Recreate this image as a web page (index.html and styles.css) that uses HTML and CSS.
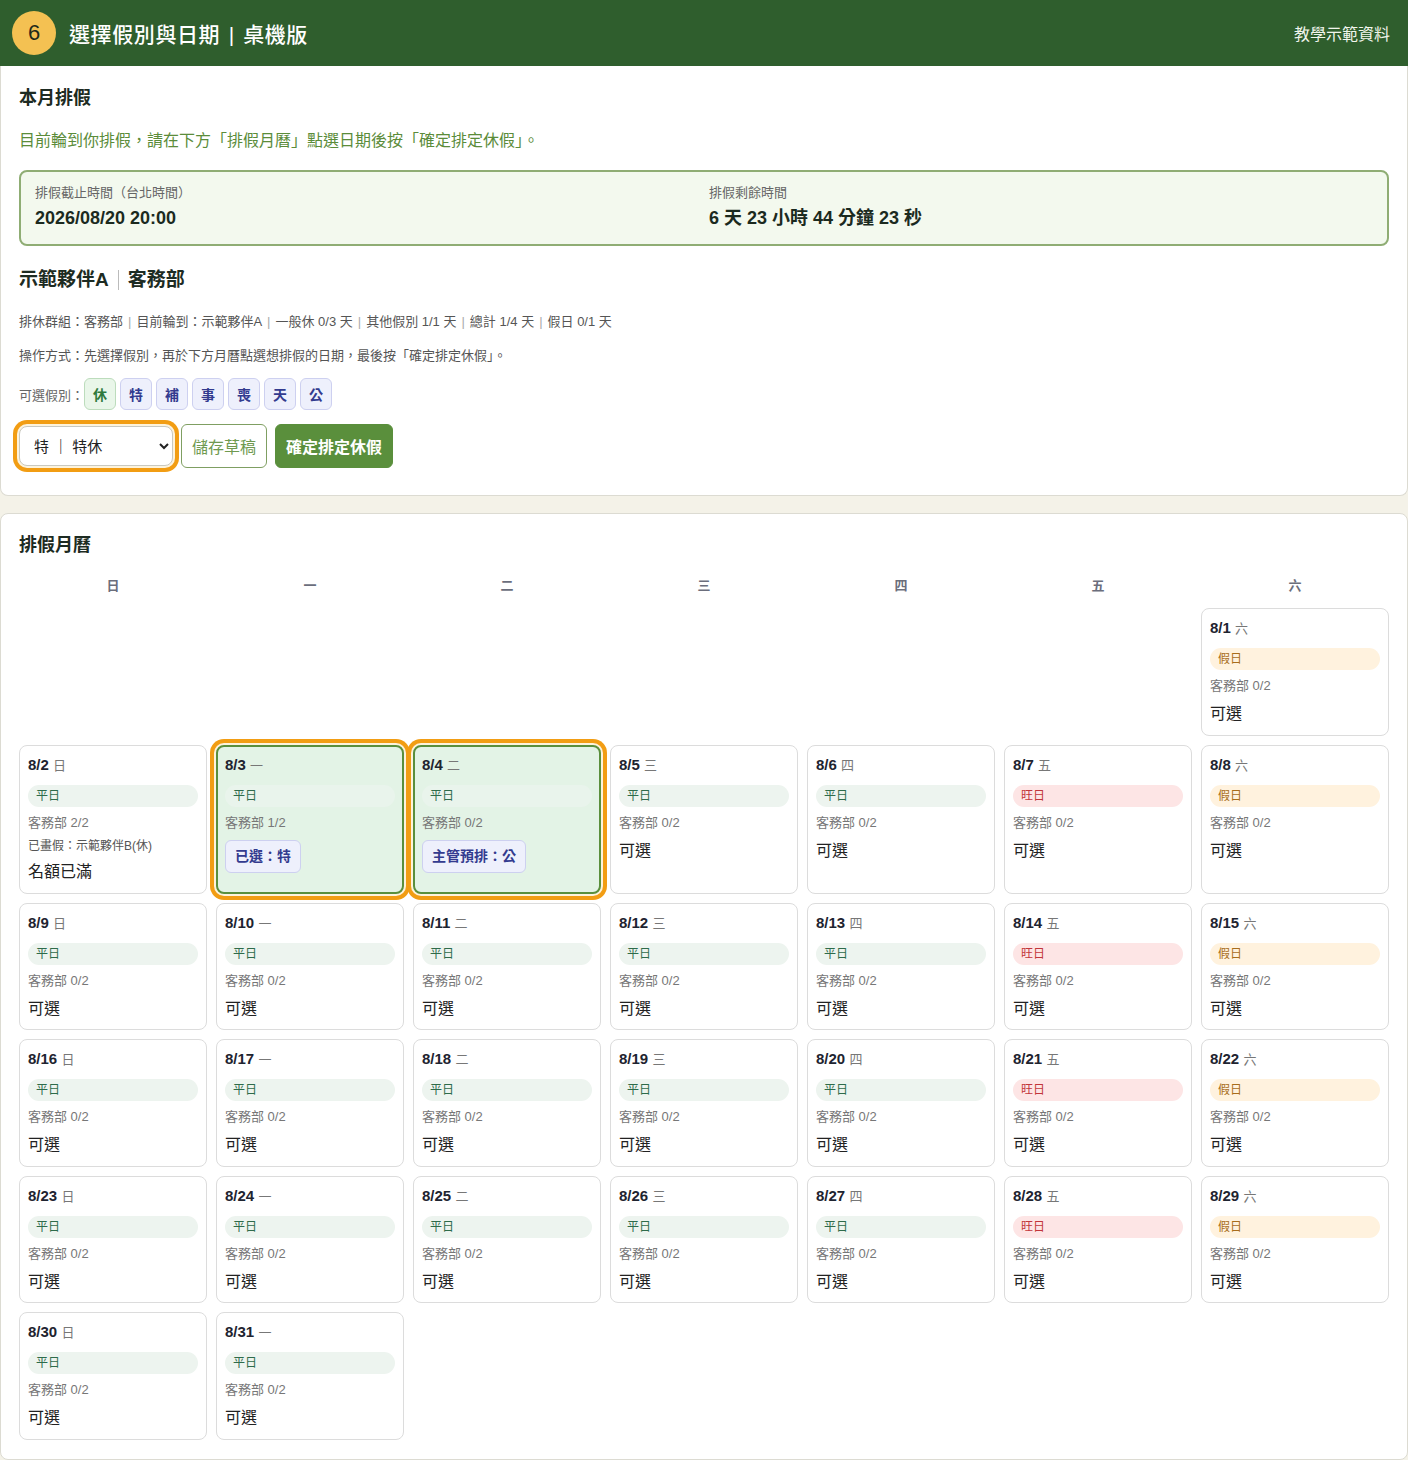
FILE: index.html
```html
<!DOCTYPE html>
<html lang="zh-Hant">
<head>
<meta charset="utf-8">
<title>選擇假別與日期｜桌機版</title>
<link rel="stylesheet" href="styles.css">
</head>
<body>
<header class="topbar">
  <div class="brand">
    <span class="step">6</span>
    <span class="title">選擇假別與日期 <span class="bar">|</span> 桌機版</span>
  </div>
  <div class="topnote">教學示範資料</div>
</header>

<main class="page">
  <section class="card">
    <h2 class="card-title">本月排假</h2>
    <p class="notice">目前輪到你排假，請在下方「排假月曆」點選日期後按「確定排定休假」。</p>
    <div class="infobox">
      <div class="info-col">
        <div class="info-label">排假截止時間（台北時間）</div>
        <div class="info-value">2026/08/20 20:00</div>
      </div>
      <div class="info-col">
        <div class="info-label">排假剩餘時間</div>
        <div class="info-value">6 天 23 小時 44 分鐘 23 秒</div>
      </div>
    </div>
    <h3 class="person">示範夥伴A<span class="vbar"></span>客務部</h3>
    <p class="meta">排休群組：客務部<span class="sep">|</span>目前輪到：示範夥伴A<span class="sep">|</span>一般休 0/3 天<span class="sep">|</span>其他假別 1/1 天<span class="sep">|</span>總計 1/4 天<span class="sep">|</span>假日 0/1 天</p>
    <p class="meta howto">操作方式：先選擇假別，再於下方月曆點選想排假的日期，最後按「確定排定休假」。</p>
    <div class="types">
      <span class="types-label">可選假別：</span>
      <span class="chip chip-green">休</span>
      <span class="chip">特</span>
      <span class="chip">補</span>
      <span class="chip">事</span>
      <span class="chip">喪</span>
      <span class="chip">天</span>
      <span class="chip">公</span>
    </div>
    <div class="controls">
      <select class="type-select">
        <option>特 ｜ 特休</option>
      </select>
      <button class="btn btn-outline">儲存草稿</button>
      <button class="btn btn-primary">確定排定休假</button>
    </div>
  </section>

  <section class="card calendar-card">
    <h2 class="card-title">排假月曆</h2>
    <div class="weekdays">
      <div>日</div><div>一</div><div>二</div><div>三</div><div>四</div><div>五</div><div>六</div>
    </div>
    <div class="grid">
      <div class="empty"></div><div class="empty"></div><div class="empty"></div><div class="empty"></div><div class="empty"></div><div class="empty"></div>
      <div class="day"><div class="date">8/1 <span class="wd">六</span></div><div class="tag tag-holiday">假日</div><div class="quota">客務部 0/2</div><div class="status">可選</div></div>

      <div class="day"><div class="date">8/2 <span class="wd">日</span></div><div class="tag tag-normal">平日</div><div class="quota">客務部 2/2</div><div class="taken">已畫假：示範夥伴B(休)</div><div class="status">名額已滿</div></div>
      <div class="day selected"><div class="date">8/3 <span class="wd">一</span></div><div class="tag tag-normal tag-light">平日</div><div class="quota">客務部 1/2</div><div class="pick">已選：特</div></div>
      <div class="day selected"><div class="date">8/4 <span class="wd">二</span></div><div class="tag tag-normal tag-light">平日</div><div class="quota">客務部 0/2</div><div class="pick">主管預排：公</div></div>
      <div class="day"><div class="date">8/5 <span class="wd">三</span></div><div class="tag tag-normal">平日</div><div class="quota">客務部 0/2</div><div class="status">可選</div></div>
      <div class="day"><div class="date">8/6 <span class="wd">四</span></div><div class="tag tag-normal">平日</div><div class="quota">客務部 0/2</div><div class="status">可選</div></div>
      <div class="day"><div class="date">8/7 <span class="wd">五</span></div><div class="tag tag-peak">旺日</div><div class="quota">客務部 0/2</div><div class="status">可選</div></div>
      <div class="day"><div class="date">8/8 <span class="wd">六</span></div><div class="tag tag-holiday">假日</div><div class="quota">客務部 0/2</div><div class="status">可選</div></div>

      <div class="day"><div class="date">8/9 <span class="wd">日</span></div><div class="tag tag-normal">平日</div><div class="quota">客務部 0/2</div><div class="status">可選</div></div>
      <div class="day"><div class="date">8/10 <span class="wd">一</span></div><div class="tag tag-normal">平日</div><div class="quota">客務部 0/2</div><div class="status">可選</div></div>
      <div class="day"><div class="date">8/11 <span class="wd">二</span></div><div class="tag tag-normal">平日</div><div class="quota">客務部 0/2</div><div class="status">可選</div></div>
      <div class="day"><div class="date">8/12 <span class="wd">三</span></div><div class="tag tag-normal">平日</div><div class="quota">客務部 0/2</div><div class="status">可選</div></div>
      <div class="day"><div class="date">8/13 <span class="wd">四</span></div><div class="tag tag-normal">平日</div><div class="quota">客務部 0/2</div><div class="status">可選</div></div>
      <div class="day"><div class="date">8/14 <span class="wd">五</span></div><div class="tag tag-peak">旺日</div><div class="quota">客務部 0/2</div><div class="status">可選</div></div>
      <div class="day"><div class="date">8/15 <span class="wd">六</span></div><div class="tag tag-holiday">假日</div><div class="quota">客務部 0/2</div><div class="status">可選</div></div>

      <div class="day"><div class="date">8/16 <span class="wd">日</span></div><div class="tag tag-normal">平日</div><div class="quota">客務部 0/2</div><div class="status">可選</div></div>
      <div class="day"><div class="date">8/17 <span class="wd">一</span></div><div class="tag tag-normal">平日</div><div class="quota">客務部 0/2</div><div class="status">可選</div></div>
      <div class="day"><div class="date">8/18 <span class="wd">二</span></div><div class="tag tag-normal">平日</div><div class="quota">客務部 0/2</div><div class="status">可選</div></div>
      <div class="day"><div class="date">8/19 <span class="wd">三</span></div><div class="tag tag-normal">平日</div><div class="quota">客務部 0/2</div><div class="status">可選</div></div>
      <div class="day"><div class="date">8/20 <span class="wd">四</span></div><div class="tag tag-normal">平日</div><div class="quota">客務部 0/2</div><div class="status">可選</div></div>
      <div class="day"><div class="date">8/21 <span class="wd">五</span></div><div class="tag tag-peak">旺日</div><div class="quota">客務部 0/2</div><div class="status">可選</div></div>
      <div class="day"><div class="date">8/22 <span class="wd">六</span></div><div class="tag tag-holiday">假日</div><div class="quota">客務部 0/2</div><div class="status">可選</div></div>

      <div class="day"><div class="date">8/23 <span class="wd">日</span></div><div class="tag tag-normal">平日</div><div class="quota">客務部 0/2</div><div class="status">可選</div></div>
      <div class="day"><div class="date">8/24 <span class="wd">一</span></div><div class="tag tag-normal">平日</div><div class="quota">客務部 0/2</div><div class="status">可選</div></div>
      <div class="day"><div class="date">8/25 <span class="wd">二</span></div><div class="tag tag-normal">平日</div><div class="quota">客務部 0/2</div><div class="status">可選</div></div>
      <div class="day"><div class="date">8/26 <span class="wd">三</span></div><div class="tag tag-normal">平日</div><div class="quota">客務部 0/2</div><div class="status">可選</div></div>
      <div class="day"><div class="date">8/27 <span class="wd">四</span></div><div class="tag tag-normal">平日</div><div class="quota">客務部 0/2</div><div class="status">可選</div></div>
      <div class="day"><div class="date">8/28 <span class="wd">五</span></div><div class="tag tag-peak">旺日</div><div class="quota">客務部 0/2</div><div class="status">可選</div></div>
      <div class="day"><div class="date">8/29 <span class="wd">六</span></div><div class="tag tag-holiday">假日</div><div class="quota">客務部 0/2</div><div class="status">可選</div></div>

      <div class="day"><div class="date">8/30 <span class="wd">日</span></div><div class="tag tag-normal">平日</div><div class="quota">客務部 0/2</div><div class="status">可選</div></div>
      <div class="day"><div class="date">8/31 <span class="wd">一</span></div><div class="tag tag-normal">平日</div><div class="quota">客務部 0/2</div><div class="status">可選</div></div>
    </div>
  </section>
</main>
</body>
</html>
```

FILE: styles.css
```css
* { box-sizing: border-box; }

html, body {
  margin: 0;
  padding: 0;
}

body {
  background: #f4f2e8;
  font-family: "Liberation Sans", "Noto Sans CJK TC", sans-serif;
  color: #222;
}

.topbar {
  height: 66px;
  background: #2f5e2d;
  display: flex;
  align-items: center;
  justify-content: space-between;
  padding: 0 18px 0 12px;
}

.brand {
  display: flex;
  align-items: center;
  gap: 13px;
}

.step {
  width: 44px;
  height: 44px;
  border-radius: 50%;
  background: #f4c152;
  color: #1f2a1a;
  display: flex;
  align-items: center;
  justify-content: center;
  font-size: 22px;
}

.title {
  color: #fff;
  font-size: 21px;
  font-weight: 500;
  letter-spacing: 0.6px;
}

.title .bar {
  font-weight: 400;
  margin: 0 2px;
}

.topnote {
  color: #f1f5ec;
  font-size: 16px;
}

.page {
  display: flex;
  flex-direction: column;
  gap: 17px;
}

.card {
  background: #fff;
  border: 1px solid #dcdbd2;
  border-radius: 8px;
  padding: 20px 18px 27px;
}

.card:first-child {
  border-top: none;
  border-radius: 0 0 8px 8px;
}

.card-title {
  margin: 0;
  font-size: 18px;
  line-height: 24px;
  font-weight: 700;
  color: #1d2b22;
}

.notice {
  margin: 20px 0 0;
  font-size: 16px;
  line-height: 22px;
  color: #5b8c3a;
}

.infobox {
  margin-top: 18px;
  border: 2px solid #8fad74;
  background: #f3f9ee;
  border-radius: 8px;
  padding: 12px 14px 14px;
  display: grid;
  grid-template-columns: 1fr 1fr;
  gap: 10px;
}

.info-label {
  font-size: 13px;
  line-height: 18px;
  color: #666;
}

.info-value {
  margin-top: 5px;
  font-size: 18px;
  line-height: 23px;
  font-weight: 700;
  color: #1b2a1e;
}

.person {
  margin: 22px 0 0;
  font-size: 19px;
  line-height: 24px;
  font-weight: 700;
  color: #1d2b22;
  display: flex;
  align-items: center;
}

.vbar {
  display: inline-block;
  width: 1px;
  height: 20px;
  background: #bbb;
  margin: 0 9px;
}

.meta {
  margin: 21px 0 0;
  font-size: 13px;
  line-height: 18px;
  color: #555;
}

.meta .sep {
  color: #aaa;
  margin: 0 5px;
}

.howto {
  margin-top: 16px;
}

.types {
  margin-top: 13px;
  display: flex;
  align-items: center;
  gap: 4px;
}

.types-label {
  font-size: 13px;
  color: #666;
  margin-right: -4px;
}

.chip {
  width: 32px;
  height: 32px;
  border-radius: 6px;
  border: 1px solid #cdd0f0;
  background: #eef0fc;
  color: #333b8f;
  display: flex;
  align-items: center;
  justify-content: center;
  font-size: 14px;
  font-weight: 700;
}

.chip-green {
  border-color: #bcdcbc;
  background: #e9f6e9;
  color: #2e7a3c;
}

.controls {
  margin-top: 14px;
  display: flex;
  align-items: center;
  gap: 8px;
}

.type-select {
  width: 154px;
  height: 40px;
  margin: 0;
  border: 1px solid #c9c9c0;
  border-radius: 8px;
  background: #fff;
  box-shadow: 0 0 0 2px #fdf3dc, 0 0 0 6px #f29d13;
  font-family: "Liberation Sans", "Noto Sans CJK TC", sans-serif;
  font-size: 15px;
  color: #222;
  padding: 0 8px 0 10px;
  outline: none;
}

.btn {
  height: 44px;
  border-radius: 6px;
  font-family: "Liberation Sans", "Noto Sans CJK TC", sans-serif;
  font-size: 16px;
  padding: 0 10px;
  cursor: pointer;
}

.btn-outline {
  background: #fff;
  border: 1px solid #7f9f62;
  color: #6f9a50;
}

.btn-primary {
  background: #5a8f3c;
  border: 1px solid #5a8f3c;
  color: #fff;
  font-weight: 700;
}

.calendar-card {
  padding: 19px 18px 19px;
}

.weekdays {
  margin-top: 19px;
  margin-bottom: 12px;
  display: grid;
  grid-template-columns: repeat(7, 1fr);
  gap: 9px;
  text-align: center;
  font-size: 13px;
  line-height: 20px;
  height: 20px;
  font-weight: 700;
  color: #6b6e7c;
}

.grid {
  display: grid;
  grid-template-columns: repeat(7, 1fr);
  gap: 9px;
}

.day {
  border: 1px solid #dcdcdc;
  border-radius: 8px;
  background: #fff;
  padding: 9px 8px 9.5px;
}

.day.selected {
  border: 2px solid #5a8f3c;
  background: #e3f3e6;
  padding: 8px 7px 8.5px;
  box-shadow: 0 0 0 2px #fdf3dc, 0 0 0 6px #f29d13;
}

.date {
  height: 20px;
  font-size: 15px;
  line-height: 20px;
  font-weight: 700;
  color: #1e2430;
}

.wd {
  font-size: 13px;
  font-weight: 400;
  color: #777;
}

.tag {
  margin-top: 10px;
  height: 22px;
  border-radius: 11px;
  font-size: 12px;
  line-height: 22px;
  padding: 0 8px;
}

.tag-normal {
  background: #edf4ef;
  color: #2e6b4a;
}

.tag-light {
  background: #e9f4ec;
}

.tag-holiday {
  background: #fff2de;
  color: #a86d1c;
}

.tag-peak {
  background: #fde5e5;
  color: #c2353a;
}

.quota {
  margin-top: 7px;
  height: 18px;
  font-size: 13px;
  line-height: 18px;
  color: #777;
}

.taken {
  margin-top: 6px;
  height: 17px;
  font-size: 12px;
  line-height: 17px;
  color: #555;
}

.status {
  margin-top: 8px;
  height: 22px;
  font-size: 16px;
  line-height: 22px;
  color: #222;
}

.taken + .status {
  margin-top: 6.5px;
}

.pick {
  margin-top: 8px;
  display: inline-block;
  height: 33px;
  line-height: 31px;
  padding: 0 9px;
  border: 1px solid #cdd0f0;
  background: #eef0fc;
  color: #333b8f;
  border-radius: 6px;
  font-size: 14px;
  font-weight: 700;
}
```
